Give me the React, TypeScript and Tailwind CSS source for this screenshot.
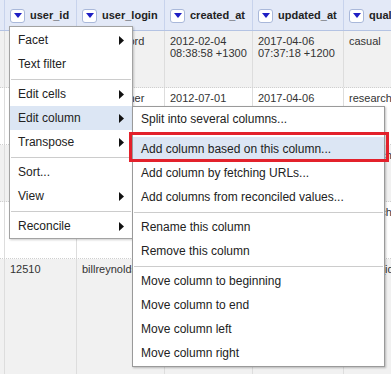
import React from "react";

const font = { fontFamily: '"Liberation Sans", Arial, sans-serif' };

function DropButton() {
  return (
    <span className="flex h-[14px] w-[15px] shrink-0 items-center justify-center rounded-[3px] border border-[#a9b8da] bg-white">
      <svg width="8" height="5" viewBox="0 0 8 5">
        <path d="M0 0H8L4 5Z" fill="#1f1fc4" />
      </svg>
    </span>
  );
}

function Arrow() {
  return (
    <svg width="5" height="9" viewBox="0 0 5 9">
      <path d="M0 0L5 4.5L0 9Z" fill="#111" />
    </svg>
  );
}

const headers = [
  { w: "w-[72px]", label: "user_id" },
  { w: "w-[88px]", label: "user_login" },
  { w: "w-[88px]", label: "created_at" },
  { w: "w-[91px]", label: "updated_at" },
  { w: "w-[60px]", label: "quality_grade" },
];

const rows = [
  { bg: "bg-[#f1f1f1]", h: "h-[57px]", cells: ["", "kenblackford", "2012-02-04\n08:38:58 +1300", "2017-04-06\n07:37:18 +1200", "casual"] },
  { bg: "bg-white", h: "h-[57px]", cells: ["", "davidfletcher", "2012-07-01", "2017-04-06", "research"] },
  { bg: "bg-[#f1f1f1]", h: "h-[57px]", cells: ["", "", "", "", "research"] },
  { bg: "bg-white", h: "h-[57px]", cells: ["", "", "", "", "research"] },
  { bg: "bg-[#f1f1f1]", h: "h-[120px]", cells: ["12510", "billreynolds", "2012-09-14", "2017-04-06", "needs_id"] },
];

function MenuItem({ label, sub, active }: { label: string; sub?: boolean; active?: boolean }) {
  return (
    <div className={`flex h-[24px] items-center justify-between pl-[8px] pr-[8px] ${active ? "bg-[#dce6f4]" : ""}`}>
      <span>{label}</span>
      {sub && <Arrow />}
    </div>
  );
}

function Sep() {
  return <div className="mx-px mt-[3px] mb-[2px] h-px bg-[#cccccc]" />;
}

export default function App() {
  return (
    <div className="relative h-[374px] w-[391px] overflow-hidden bg-white" style={font}>
      {/* cabecera */}
      <div className="flex h-[31px] w-max border-b border-[#b4c3e3] bg-[#e3e9f7]">
        <div className="w-[4px] shrink-0" />
        {headers.map((h) => (
          <div key={h.label} className={`${h.w} flex shrink-0 items-center gap-[5px] border-l border-[#c8d3ec] pl-[5px] pt-px`}>
            <DropButton />
            <span className="whitespace-nowrap text-[11px] font-bold text-[#222]">{h.label}</span>
          </div>
        ))}
      </div>

      {/* filas */}
      {rows.map((r, i) => (
        <div key={i} className={`flex w-max ${r.h} ${r.bg} border-b border-dotted border-[#cfcfcf]`}>
          <div className="w-[4px] shrink-0" />
          {r.cells.map((c, j) => (
            <div
              key={j}
              className={`${headers[j].w} shrink-0 overflow-hidden whitespace-pre border-l border-[#dddddd] pl-[5px] pt-[4px] text-[11px] leading-[12px] text-[#333]`}
            >
              {c}
            </div>
          ))}
        </div>
      ))}

      {/* menú principal */}
      <div className="absolute left-[9px] top-[26px] w-[124px] border border-[#a3a3a3] bg-white pt-px text-[12px] text-[#222] shadow-[1px_1px_2px_rgba(0,0,0,0.2)]">
        <MenuItem label="Facet" sub />
        <MenuItem label="Text filter" />
        <Sep />
        <MenuItem label="Edit cells" sub />
        <MenuItem label="Edit column" sub active />
        <MenuItem label="Transpose" sub />
        <Sep />
        <MenuItem label="Sort..." />
        <MenuItem label="View" sub />
        <Sep />
        <MenuItem label="Reconcile" sub />
      </div>

      {/* submenú */}
      <div className="absolute left-[132px] top-[106px] w-[253px] border border-[#9a9a9a] bg-white pb-px text-[12px] text-[#222] shadow-[1px_1px_2px_rgba(0,0,0,0.25)]">
        <MenuItem label="Split into several columns..." />
        <Sep />
        <div className="relative">
          <MenuItem label="Add column based on this column..." active />
          <div className="absolute -bottom-[1px] -left-[4px] -right-[5px] -top-[5px] border-[3px] border-[#e3212b]" />
        </div>
        <MenuItem label="Add column by fetching URLs..." />
        <MenuItem label="Add columns from reconciled values..." />
        <Sep />
        <MenuItem label="Rename this column" />
        <MenuItem label="Remove this column" />
        <Sep />
        <MenuItem label="Move column to beginning" />
        <MenuItem label="Move column to end" />
        <MenuItem label="Move column left" />
        <MenuItem label="Move column right" />
      </div>
    </div>
  );
}
